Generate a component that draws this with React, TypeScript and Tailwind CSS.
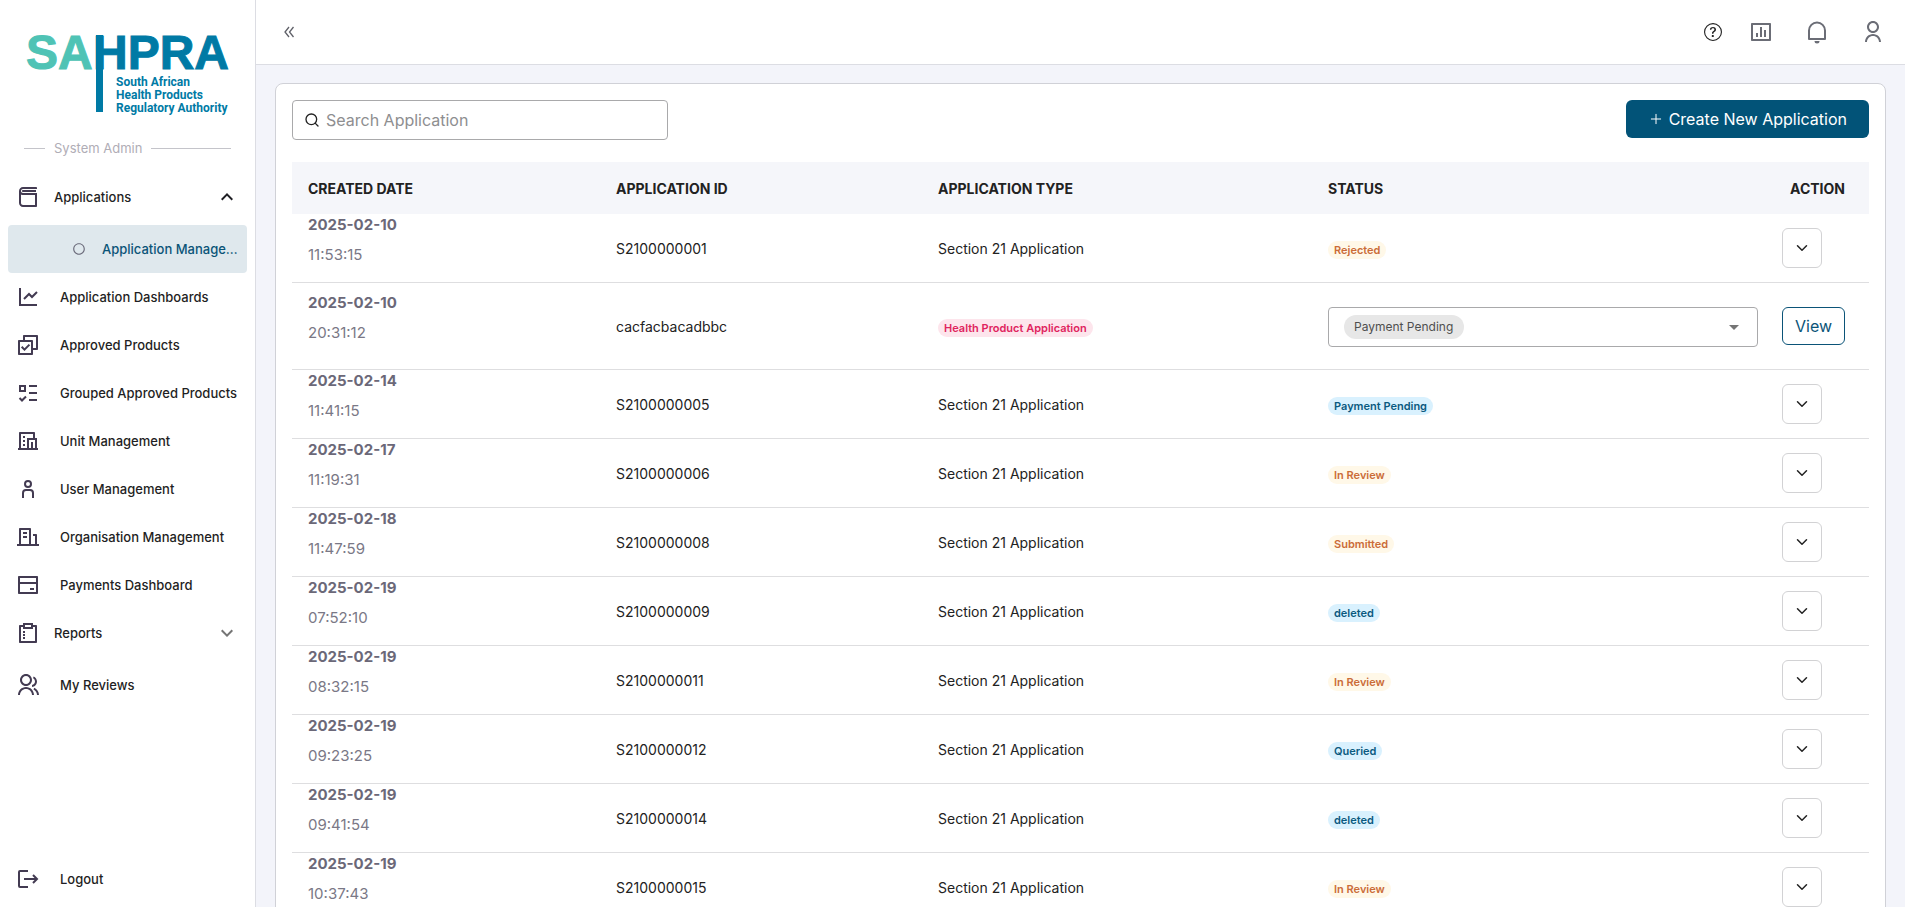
import { useState } from "react";
import type { ReactNode } from "react";
import { ChevronDown, Plus, Search } from "lucide-react";
import { BsQuestionCircle } from "react-icons/bs";
import { MdArrowDropDown, MdExpandLess, MdExpandMore } from "react-icons/md";
import {
  RiBankCardLine,
  RiBarChartBoxLine,
  RiBook3Line,
  RiBuildingLine,
  RiCheckboxBlankCircleLine,
  RiCheckboxMultipleLine,
  RiGroupLine,
  RiHotelLine,
  RiLineChartLine,
  RiListCheck3,
  RiSurveyLine,
  RiUserLine,
} from "react-icons/ri";

interface Application {
  date: string;
  time: string;
  id: string;
  type: string;
  status: string;
  draft?: boolean;
}

const applications: Application[] = [
  { date: "2025-02-10", time: "11:53:15", id: "S2100000001", type: "Section 21 Application", status: "Rejected" },
  { date: "2025-02-10", time: "20:31:12", id: "cacfacbacadbbc", type: "Health Product Application", status: "Payment Pending", draft: true },
  { date: "2025-02-14", time: "11:41:15", id: "S2100000005", type: "Section 21 Application", status: "Payment Pending" },
  { date: "2025-02-17", time: "11:19:31", id: "S2100000006", type: "Section 21 Application", status: "In Review" },
  { date: "2025-02-18", time: "11:47:59", id: "S2100000008", type: "Section 21 Application", status: "Submitted" },
  { date: "2025-02-19", time: "07:52:10", id: "S2100000009", type: "Section 21 Application", status: "deleted" },
  { date: "2025-02-19", time: "08:32:15", id: "S2100000011", type: "Section 21 Application", status: "In Review" },
  { date: "2025-02-19", time: "09:23:25", id: "S2100000012", type: "Section 21 Application", status: "Queried" },
  { date: "2025-02-19", time: "09:41:54", id: "S2100000014", type: "Section 21 Application", status: "deleted" },
  { date: "2025-02-19", time: "10:37:43", id: "S2100000015", type: "Section 21 Application", status: "In Review" },
];

const statusColors: Record<string, string> = {
  Rejected: "bg-[#fff8e8] text-[#cb6c38]",
  "In Review": "bg-[#fff8e8] text-[#cb6c38]",
  Submitted: "bg-[#fff8e8] text-[#cb6c38]",
  "Payment Pending": "bg-[#d9f1fe] text-[#0b5a80]",
  Queried: "bg-[#d9f1fe] text-[#0b5a80]",
  deleted: "bg-[#d9f1fe] text-[#0b5a80]",
};

function CollapseIcon() {
  return (
    <svg viewBox="0 0 12 12" className="size-3" fill="none" stroke="currentColor" strokeWidth="1.300">
      <path d="M6 1 2 6l4 5M10.500 1l-4 5 4 5" />
    </svg>
  );
}

function PersonIcon() {
  return (
    <svg viewBox="0 0 24 24" className="size-6" fill="none" stroke="currentColor" strokeWidth="2">
      <circle cx="12" cy="7" r="3" />
      <path d="M7 21v-5a3 3 0 0 1 3-3h4a3 3 0 0 1 3 3v5" />
    </svg>
  );
}

function LogoutIcon() {
  return (
    <svg viewBox="0 0 24 24" className="size-6" fill="none" stroke="currentColor" strokeWidth="2">
      <path d="M12 4H4a1 1 0 0 0-1 1v14a1 1 0 0 0 1 1h8" />
      <path d="M8 12h13M17 8l4 4-4 4" />
    </svg>
  );
}

function BellIcon() {
  return (
    <svg viewBox="0 0 24 24" className="size-6" fill="none" stroke="currentColor" strokeWidth="2">
      <path d="M4 19v-8.500a8 8 0 0 1 16 0V19z" strokeLinejoin="round" />
      <path d="M9.500 21h5a2.500 2.500 0 0 1-5 0z" fill="currentColor" stroke="none" />
    </svg>
  );
}

function Logo() {
  return (
    <svg viewBox="-4 -12 212 96" className="h-24 w-[212px]" role="img" aria-label="SAHPRA">
      <g fontFamily="'Liberation Sans', Arial, sans-serif" fontWeight="700" fontSize="48" strokeWidth="1">
        <text x="0" y="36" fill="#4fc3b5" stroke="#4fc3b5">SA</text>
        <text x="67" y="36" fill="#007aa5" stroke="#007aa5">HPRA</text>
      </g>
      <rect x="70" y="2" width="7" height="77" fill="#007aa5" />
      <g fontFamily="Roboto, sans-serif" fontWeight="700" fontSize="12" fill="#007aa5">
        <text x="90" y="53">South African</text>
        <text x="90" y="66">Health Products</text>
        <text x="90" y="79">Regulatory Authority</text>
      </g>
    </svg>
  );
}

function NavItem({ icon, label }: { icon: ReactNode; label: string }) {
  return (
    <a href="#" className="flex h-12 items-center gap-5 px-4 text-[13px] leading-5 font-medium text-[#1f1f24]">
      <span className="shrink-0 text-[#433b52]">{icon}</span>
      <span className="whitespace-nowrap">{label}</span>
    </a>
  );
}

function NavGroup({ icon, label, open }: { icon: ReactNode; label: string; open?: boolean }) {
  return (
    <button type="button" aria-expanded={!!open} className="mb-1 flex h-12 w-full items-center px-4 text-[13px] leading-5 font-medium text-[#1f1f24]">
      <span className="mr-[14px] shrink-0 text-[#433b52]">{icon}</span>
      {label}
      <span className="ml-auto">
        {open ? <MdExpandLess className="size-6" /> : <MdExpandMore className="size-6 text-[#757575]" />}
      </span>
    </button>
  );
}

function Sidebar() {
  return (
    <aside className="flex w-64 shrink-0 flex-col border-r border-[#dcdde3] bg-white pb-1">
      <div className="px-[22px] pt-[21px]">
        <Logo />
      </div>
      <div className="mt-[21px] mb-[15px] flex h-5 items-center gap-[9px] px-6 text-[13px] leading-5 text-[#b0adb6]">
        <span className="h-px w-[21px] bg-[#c4c4ca]" />
        System Admin
        <span className="h-px flex-1 bg-[#c4c4ca]" />
      </div>
      <nav>
        <NavGroup icon={<RiBook3Line className="size-6" />} label="Applications" open />
        <a href="#" className="mx-2 flex h-12 items-center gap-4 rounded-[4px] bg-[#dfe8ed] pr-1 pl-16 text-[13px] leading-5 font-medium text-[#0b5478]">
          <RiCheckboxBlankCircleLine className="size-[14px] shrink-0 text-[#6b6b7b]" />
          <span className="truncate">Application Management</span>
        </a>
        <NavItem icon={<RiLineChartLine className="size-6" />} label="Application Dashboards" />
        <NavItem icon={<RiCheckboxMultipleLine className="size-6" />} label="Approved Products" />
        <NavItem icon={<RiListCheck3 className="size-6" />} label="Grouped Approved Products" />
        <NavItem icon={<RiHotelLine className="size-6" />} label="Unit Management" />
        <NavItem icon={<PersonIcon />} label="User Management" />
        <NavItem icon={<RiBuildingLine className="size-6" />} label="Organisation Management" />
        <NavItem icon={<RiBankCardLine className="size-6" />} label="Payments Dashboard" />
        <NavGroup icon={<RiSurveyLine className="size-6" />} label="Reports" />
        <NavItem icon={<RiGroupLine className="size-6" />} label="My Reviews" />
      </nav>
      <div className="mt-auto">
        <NavItem icon={<LogoutIcon />} label="Logout" />
      </div>
    </aside>
  );
}

function Header() {
  return (
    <header className="flex h-[65px] shrink-0 items-center justify-between border-b border-[#dcdde3] bg-white pr-5 pl-[27px]">
      <button type="button" aria-label="Collapse menu" className="text-[#5f6068]">
        <CollapseIcon />
      </button>
      <div className="flex items-center text-[#6b6d76]">
        <button type="button" aria-label="Help" className="mr-[27px] text-[#222]">
          <BsQuestionCircle className="size-[18px]" />
        </button>
        <button type="button" aria-label="Statistics" className="mr-8">
          <RiBarChartBoxLine className="size-6" />
        </button>
        <button type="button" aria-label="Notifications" className="mr-8">
          <BellIcon />
        </button>
        <button type="button" aria-label="Profile">
          <RiUserLine className="size-6" />
        </button>
      </div>
    </header>
  );
}

function StatusSelect({ value, label }: { value: string; label: string }) {
  const [status, setStatus] = useState(value);

  return (
    <div className="flex h-10 items-center justify-between rounded-[4px] border border-[#a9a9ab] pr-[11px] pl-[15px]">
      <select
        aria-label={label}
        value={status}
        onChange={(e) => setStatus(e.target.value)}
        className="h-6 appearance-none rounded-full bg-[#e7e7e7] px-[10px] text-xs text-[#4f4f4f]"
      >
        <option>Payment Pending</option>
        <option>In Review</option>
        <option>Submitted</option>
        <option>Queried</option>
        <option>Rejected</option>
      </select>
      <MdArrowDropDown className="pointer-events-none size-6 text-[#757575]" />
    </div>
  );
}

function Row({ app }: { app: Application }) {
  return (
    <tr className={`*:border-b *:border-[#dedee0] ${app.draft ? "h-[87px]" : "h-[69px]"}`}>
      <td className="px-4">
        <div className="flex flex-col gap-[10px] pb-4 text-[15px] leading-5 text-[#7a7886]">
          <span className="font-bold text-[#6b6878]">{app.date}</span>
          <span>{app.time}</span>
        </div>
      </td>
      <td className="px-4 pt-0.5">{app.id}</td>
      <td className="px-4 pt-0.5">
        {app.draft ? (
          <span className="inline-flex h-[18px] items-center rounded-full bg-[#fde5ec] px-[6px] text-[11px] font-semibold whitespace-nowrap text-[#e0245e]">
            {app.type}
          </span>
        ) : (
          app.type
        )}
      </td>
      <td className="px-4 pt-0.5">
        {app.draft ? (
          <StatusSelect value={app.status} label={`Status of ${app.id}`} />
        ) : (
          <span className={`inline-flex h-[18px] items-center rounded-full px-[6px] text-[11px] font-semibold whitespace-nowrap ${statusColors[app.status]}`}>
            {app.status}
          </span>
        )}
      </td>
      <td className="pr-6 pl-2">
        {app.draft ? (
          <button type="button" className="block h-[38px] w-full rounded-[6px] border border-[#0b5478] text-base text-[#0b5478]">
            View
          </button>
        ) : (
          <button type="button" aria-label={`Actions for ${app.id}`} className="flex size-10 items-center justify-center rounded-[6px] border border-[#d2d2d4] text-[#222]">
            <ChevronDown className="size-[18px]" />
          </button>
        )}
      </td>
    </tr>
  );
}

export default function App() {
  return (
    <div className="flex h-screen overflow-hidden bg-[#f3f4fa] font-[Inter,sans-serif] text-[#222]">
      <Sidebar />
      <div className="flex min-w-0 flex-1 flex-col">
        <Header />
        <main className="min-h-0 flex-1 overflow-y-auto px-[19px] pt-[18px] [scrollbar-width:none]">
          <div className="rounded-lg border border-[#d0d1d7] bg-white p-4">
            <div className="mb-[22px] flex items-start justify-between gap-4">
              <label className="flex h-10 w-full max-w-[376px] items-center gap-[6px] rounded-[4px] border border-[#a9a9ab] px-[11px]">
                <Search className="size-4 shrink-0" />
                <input type="text" aria-label="Search Application" placeholder="Search Application" className="min-w-0 flex-1 text-base outline-none placeholder:text-[#8e8e90]" />
              </label>
              <button type="button" className="flex h-[38px] shrink-0 items-center gap-[5px] rounded-[6px] bg-[#025378] px-[22px] text-base text-white">
                <Plus className="size-4" strokeWidth={1.5} />
                Create New Application
              </button>
            </div>
            <table className="w-full table-fixed border-separate border-spacing-0 text-left text-sm">
              <thead>
                <tr className="h-[52px] bg-[#f5f6fa]">
                  <th className="w-[308px] px-4 pt-0.5">CREATED DATE</th>
                  <th className="w-[322px] px-4 pt-0.5">APPLICATION ID</th>
                  <th className="w-[390px] px-4 pt-0.5">APPLICATION TYPE</th>
                  <th className="px-4 pt-0.5">STATUS</th>
                  <th className="w-[95px] pt-0.5 pr-6 text-right">ACTION</th>
                </tr>
              </thead>
              <tbody>
                {applications.map((app) => (
                  <Row key={app.id} app={app} />
                ))}
              </tbody>
            </table>
          </div>
        </main>
      </div>
    </div>
  );
}
